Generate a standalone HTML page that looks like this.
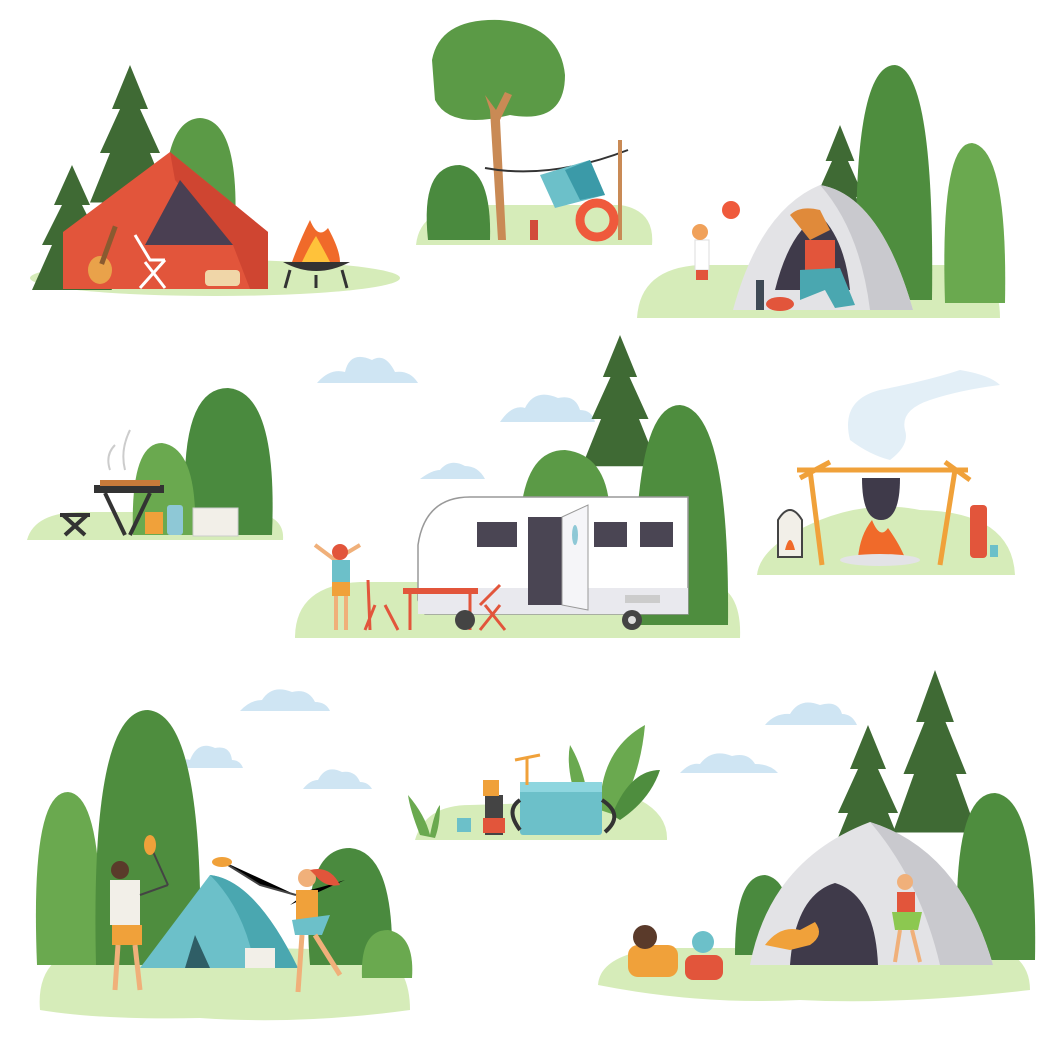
<!DOCTYPE html>
<html><head><meta charset="utf-8"><style>html,body{margin:0;padding:0;background:#fff}svg{display:block}</style></head>
<body>
<svg width="1060" height="1060" viewBox="0 0 1060 1060" xmlns="http://www.w3.org/2000/svg">
<defs>
<g id="pine"><polygon points="0,-100 -18,-60 -10,-60 -30,-20 -20,-20 -40,25 40,25 20,-20 30,-20 10,-60 18,-60" fill="#3f6a34"/></g>
</defs>
<!-- clouds -->
<g fill="#cfe5f3">
<path d="M317,383 Q330,368 345,372 Q350,350 372,360 Q385,352 395,372 Q410,370 418,383Z"/>
<path d="M500,422 Q512,404 525,408 Q535,388 558,398 Q575,394 580,410 Q592,410 595,422Z"/>
<path d="M420,479 Q432,470 440,470 Q450,458 465,466 Q478,466 485,479Z"/>
<path d="M240,711 Q250,700 262,700 Q272,684 292,692 Q308,688 315,702 Q326,702 330,711Z"/>
<path d="M175,768 Q183,757 190,760 Q198,740 215,748 Q230,745 232,760 Q240,760 243,768Z"/>
<path d="M303,789 Q310,780 318,780 Q326,764 342,772 Q355,770 360,782 Q368,782 372,789Z"/>
<path d="M765,725 Q775,713 790,714 Q800,697 820,705 Q838,700 842,714 Q852,714 857,725Z"/>
<path d="M680,773 Q690,762 700,764 Q712,748 732,756 Q748,752 755,764 Q770,764 778,773Z"/>
</g>
<!-- smoke -->
<path d="M850,440 Q840,400 880,390 Q930,380 960,370 Q990,375 1000,385 Q960,390 930,400 Q900,410 905,430 Q910,445 890,460 Q870,455 850,440Z" fill="#e3eff7"/>

<!-- Scene 1 -->
<ellipse cx="215" cy="278" rx="185" ry="18" fill="#d6ecb9"/>
<use href="#pine" x="72" y="265" transform="translate(0,0)"/>
<g transform="translate(130,175) scale(1,1.1)"><use href="#pine"/></g>
<path d="M165,230 Q160,120 200,118 Q240,120 235,230Z" fill="#5b9a46"/>
<polygon points="63,232 170,152 268,232 268,289 63,289" fill="#e2553b"/>
<polygon points="170,152 268,232 268,289 250,289 233,245 175,180" fill="#cf4531"/>
<polygon points="180,180 145,245 233,245" fill="#4a3f52"/>
<ellipse cx="100" cy="270" rx="12" ry="14" fill="#e9a24a"/><rect x="106" y="225" width="5" height="40" fill="#8a5a30" transform="rotate(20 108 245)"/>
<g stroke="#fff" stroke-width="3" fill="none"><path d="M135,235 L150,260 L165,260 M140,288 L165,260 M165,288 L145,262"/></g>
<rect x="205" y="270" width="35" height="16" rx="4" fill="#f0d6a8"/>
<path d="M283,262 Q316,280 350,262Z" fill="#333"/><path d="M290,270 L285,288 M342,270 L347,288 M316,275 V288" stroke="#333" stroke-width="3"/>
<path d="M292,262 Q300,240 310,220 Q318,240 328,228 Q340,250 340,262Z" fill="#f06a2a"/><path d="M302,262 Q310,245 316,236 Q324,250 330,262Z" fill="#ffc23a"/>

<!-- Scene 2 -->
<path d="M416,245 Q420,205 480,205 L620,205 Q655,210 652,245Z" fill="#d6ecb9"/>
<path d="M432,60 Q440,18 500,20 Q560,25 565,75 Q565,125 510,115 Q450,130 435,100Z" fill="#5b9a46"/>
<path d="M490,110 L498,240 L506,240 L500,120 L512,95 L505,92 L496,110 L485,95Z" fill="#c98a55"/>
<path d="M428,240 Q420,165 460,165 Q492,170 490,240Z" fill="#4a8a3e"/>
<path d="M485,168 Q550,180 628,150" stroke="#333" stroke-width="2" fill="none"/>
<line x1="620" y1="140" x2="620" y2="240" stroke="#c98a55" stroke-width="4"/>
<polygon points="540,175 590,160 605,195 555,208" fill="#6cc0c9"/><polygon points="565,170 590,160 605,195 580,200" fill="#3b9aa8"/>
<circle cx="597" cy="220" r="17" fill="none" stroke="#ef5a3c" stroke-width="9"/>
<rect x="530" y="220" width="8" height="20" fill="#d24b3a"/>

<!-- Scene 3 -->
<path d="M637,318 Q640,268 700,265 L960,265 Q1000,270 1000,318Z" fill="#d6ecb9"/>
<g transform="translate(840,215) scale(0.8,0.9)"><use href="#pine"/></g>
<path d="M857,300 Q850,65 895,65 Q935,70 932,300Z" fill="#4e8d3e"/>
<path d="M945,303 Q940,143 972,143 Q1008,148 1005,303Z" fill="#6aa94f"/>
<path d="M733,310 Q760,210 820,185 Q880,195 913,310Z" fill="#e3e3e6"/>
<path d="M820,185 Q880,195 913,310 L870,310 Q860,230 820,185Z" fill="#c9c9ce"/>
<path d="M775,290 Q790,230 820,215 Q845,240 850,290Z" fill="#3f3a4a"/>
<path d="M790,215 Q800,205 820,210 L830,230 L810,240Z" fill="#e08a3a"/>
<rect x="805" y="240" width="30" height="35" fill="#e2553b"/>
<path d="M800,270 L840,268 L855,305 L835,308 L825,290 L800,300Z" fill="#4aa7b0"/>
<circle cx="731" cy="210" r="9" fill="#ef5a3c"/>
<rect x="695" y="240" width="14" height="30" fill="#fff" stroke="#ddd"/><circle cx="700" cy="232" r="8" fill="#f0a15a"/>
<rect x="696" y="270" width="12" height="10" fill="#e2553b"/>
<rect x="756" y="280" width="8" height="30" fill="#3f4a55"/>
<ellipse cx="780" cy="304" rx="14" ry="7" fill="#e2553b"/>

<!-- Scene 4 -->
<path d="M27,540 Q35,510 90,512 L250,512 Q285,515 283,540Z" fill="#d6ecb9"/>
<path d="M187,535 Q175,388 228,388 Q278,392 272,535Z" fill="#4a8a3e"/>
<path d="M133,535 Q130,443 162,443 Q198,448 195,535Z" fill="#6aa94f"/>
<rect x="94" y="485" width="70" height="8" fill="#333"/>
<path d="M105,493 L125,535 M150,493 L130,535" stroke="#333" stroke-width="4"/>
<rect x="100" y="480" width="60" height="6" fill="#c87a3a"/>
<path d="M110,470 Q105,455 115,445 M125,470 Q120,450 130,430" stroke="#ccc" stroke-width="2" fill="none"/>
<path d="M60,515 H90 M63,515 L85,535 M87,515 L65,535" stroke="#333" stroke-width="4"/>
<rect x="145" y="512" width="18" height="22" fill="#f0a13a"/>
<rect x="167" y="505" width="16" height="30" rx="3" fill="#8ec8d6"/>
<rect x="193" y="508" width="45" height="28" fill="#f2efe8" stroke="#ccc"/>

<!-- Scene 5 -->
<path d="M295,638 Q295,585 360,582 L710,582 Q742,590 740,638Z" fill="#d6ecb9"/>
<g transform="translate(620,440) scale(0.95,1.05)"><use href="#pine"/></g>
<path d="M636,625 Q630,405 680,405 Q730,410 728,625Z" fill="#4e8d3e"/>
<path d="M520,520 Q525,450 565,450 Q610,455 610,520Z" fill="#5b9a46"/>
<path d="M418,600 L418,545 Q425,497 470,497 L688,497 L688,614 L425,614Z" fill="#fff" stroke="#999" stroke-width="1.5"/>
<rect x="418" y="588" width="270" height="26" fill="#e9e9ee"/>
<rect x="477" y="522" width="40" height="25" fill="#4a4553"/>
<rect x="594" y="522" width="33" height="25" fill="#4a4553"/>
<rect x="640" y="522" width="33" height="25" fill="#4a4553"/>
<rect x="528" y="517" width="34" height="88" fill="#4a4553"/>
<polygon points="562,517 588,505 588,610 562,605" fill="#f5f5f8" stroke="#999"/>
<ellipse cx="575" cy="535" rx="3" ry="10" fill="#8ec8d6"/>
<rect x="625" y="595" width="35" height="8" fill="#ccc"/>
<circle cx="632" cy="620" r="10" fill="#444"/><circle cx="632" cy="620" r="4" fill="#ddd"/>
<rect x="403" y="588" width="75" height="6" fill="#e2553b"/>
<path d="M410,594 V630 M470,594 V630" stroke="#e2553b" stroke-width="3"/>
<circle cx="465" cy="620" r="10" fill="#444"/>
<path d="M368,580 L370,630 M385,605 L398,630 M375,605 L365,630" stroke="#e2553b" stroke-width="3"/>
<path d="M480,605 L500,585 M485,605 L505,630 M500,605 L480,630" stroke="#e2553b" stroke-width="3"/>
<path d="M315,545 L335,560 L360,545" stroke="#f0b07a" stroke-width="4" fill="none"/>
<circle cx="340" cy="552" r="8" fill="#e2553b"/>
<rect x="332" y="560" width="18" height="22" fill="#6cc0c9"/><rect x="332" y="582" width="18" height="14" fill="#f0a13a"/>
<path d="M336,596 V630 M346,596 V630" stroke="#f0b07a" stroke-width="4"/>

<!-- Scene 6 -->
<path d="M757,575 Q760,545 820,520 Q870,500 920,510 Q1012,512 1015,575Z" fill="#d6ecb9"/>
<path d="M797,470 L968,470 M810,470 L822,565 M955,470 L940,565 M800,478 L830,462 M945,462 L970,480" stroke="#f0a13a" stroke-width="5" fill="none"/>
<path d="M862,478 Q862,520 881,520 Q900,520 900,478Z" fill="#3f3a4a"/>
<path d="M858,558 Q860,535 872,520 Q880,540 888,528 Q900,545 905,558Z" fill="#f06a2a"/>
<ellipse cx="880" cy="560" rx="40" ry="6" fill="#e3e3e6"/>
<rect x="970" y="505" width="17" height="53" rx="4" fill="#e2553b"/>
<rect x="990" y="545" width="8" height="12" fill="#6cc0c9"/>
<path d="M778,557 V520 Q790,500 802,520 V557Z" fill="#f2efe8" stroke="#444" stroke-width="2"/>
<path d="M785,550 Q790,530 795,550Z" fill="#f06a2a"/>

<!-- Scene 7 -->
<path d="M40,1010 Q35,950 100,945 L370,950 Q410,960 410,1010 Q300,1025 200,1018 Q100,1020 40,1010Z" fill="#d6ecb9"/>
<path d="M37,965 Q30,792 68,792 Q105,795 100,965Z" fill="#6aa94f"/>
<path d="M96,965 Q90,710 148,710 Q205,715 200,965Z" fill="#4e8d3e"/>
<path d="M310,965 Q300,848 350,848 Q395,852 392,965Z" fill="#4a8a3e"/>
<path d="M362,978 Q360,930 388,930 Q415,935 412,978Z" fill="#6aa94f"/>
<path d="M140,968 L210,875 Q255,880 298,968Z" fill="#6cc0c9"/>
<path d="M210,875 Q255,880 298,968 L255,968 Q245,910 210,875Z" fill="#4aa7b0"/>
<polygon points="195,935 185,968 210,968" fill="#2f5e66"/>
<rect x="245" y="948" width="30" height="20" fill="#f2efe8"/>
<rect x="110" y="880" width="30" height="45" fill="#f2efe8"/>
<circle cx="120" cy="870" r="9" fill="#5a3a2a"/>
<rect x="112" y="925" width="30" height="20" fill="#f0a13a"/>
<path d="M118,945 L115,990 M135,945 L140,990" stroke="#f0b07a" stroke-width="5"/>
<path d="M140,895 L168,885 M168,885 L150,845" stroke="#444" stroke-width="2"/><ellipse cx="150" cy="845" rx="6" ry="10" fill="#f0a13a"/>
<path d="M290,905 L310,890 Q330,885 345,880" stroke="none"/>
<circle cx="307" cy="878" r="9" fill="#f0b07a"/>
<path d="M310,870 Q330,865 340,885 Q325,888 315,875Z" fill="#e2553b"/>
<rect x="296" y="890" width="22" height="30" fill="#f0a13a"/>
<path d="M292,920 L330,915 L322,935 L295,935Z" fill="#6cc0c9"/>
<path d="M302,935 L298,992 M315,935 L340,975" stroke="#f0b07a" stroke-width="5"/>
<path d="M296,895 L260,885 L220,860" stroke="#444" stroke-width="2"/><ellipse cx="222" cy="862" rx="10" ry="5" fill="#f0a13a"/>

<!-- Scene 8 -->
<path d="M415,840 Q425,805 470,805 L640,800 Q668,815 667,840Z" fill="#d6ecb9"/>
<path d="M600,810 Q600,750 645,725 Q640,780 615,815Z" fill="#6aa94f"/>
<path d="M612,815 Q630,770 660,770 Q650,800 620,820Z" fill="#4e8d3e"/>
<path d="M580,810 Q565,770 570,745 Q585,770 590,810Z" fill="#6aa94f"/>
<path d="M420,835 Q410,810 408,795 Q425,815 430,835 Q435,810 440,805 Q440,825 435,838Z" fill="#6aa94f"/>
<rect x="520" y="782" width="82" height="53" rx="3" fill="#6cc0c9"/>
<rect x="520" y="782" width="82" height="10" fill="#8ed6df"/>
<path d="M520,800 Q505,810 520,830 M602,800 Q625,815 605,832" stroke="#333" stroke-width="4" fill="none"/>
<rect x="485" y="795" width="18" height="40" fill="#444"/><rect x="483" y="818" width="22" height="15" fill="#e2553b"/>
<rect x="483" y="780" width="16" height="16" fill="#f0a13a"/>
<rect x="457" y="818" width="14" height="14" fill="#6cc0c9"/>
<path d="M515,760 L540,755 M527,757 V785" stroke="#f0a13a" stroke-width="3"/>

<!-- Scene 9 -->
<path d="M598,985 Q600,955 660,948 L1000,948 Q1030,960 1030,990 Q900,1005 800,1000 Q700,1005 598,985Z" fill="#d6ecb9"/>
<g transform="translate(868,835) scale(1,1.1)"><use href="#pine"/></g>
<g transform="translate(935,800) scale(1.05,1.3)"><use href="#pine"/></g>
<path d="M958,960 Q950,793 995,793 Q1038,798 1035,960Z" fill="#4e8d3e"/>
<path d="M735,955 Q735,875 765,875 Q795,880 790,955Z" fill="#4a8a3e"/>
<path d="M750,965 Q770,860 870,822 Q960,850 993,965Z" fill="#e3e3e6"/>
<path d="M870,822 Q960,850 993,965 L940,965 Q920,880 870,822Z" fill="#c9c9ce"/>
<path d="M790,965 Q795,895 835,883 Q875,895 878,965Z" fill="#3f3a4a"/>
<path d="M765,945 Q780,925 800,930 L815,922 Q825,935 810,945 L790,950Z" fill="#f0a13a"/>
<circle cx="905" cy="882" r="8" fill="#f0b07a"/>
<rect x="897" y="892" width="18" height="22" fill="#e2553b"/>
<path d="M892,912 L922,912 L918,930 L895,930Z" fill="#8cc850"/>
<path d="M900,930 L895,962 M912,930 L920,962" stroke="#f0b07a" stroke-width="4"/>
<rect x="628" y="945" width="50" height="32" rx="10" fill="#f0a13a"/>
<circle cx="645" cy="937" r="12" fill="#5a3a2a"/>
<rect x="685" y="955" width="38" height="25" rx="8" fill="#e2553b"/>
<circle cx="703" cy="942" r="11" fill="#6cc0c9"/>
</svg>
</body></html>
